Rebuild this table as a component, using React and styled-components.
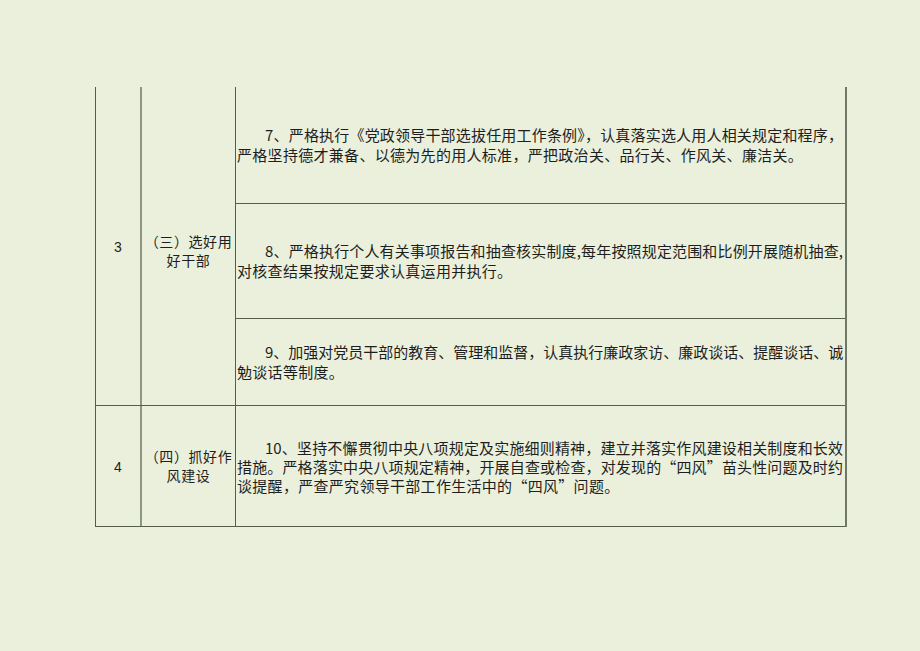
import React from 'react'
import styled, { createGlobalStyle } from 'styled-components'

const GlobalStyle = createGlobalStyle`
  html, body {
    margin: 0;
    padding: 0;
    background: #eaf0dc;
  }
  body {
    width: 920px;
    height: 651px;
    overflow: hidden;
    font-family: "Noto Sans CJK SC", "Liberation Sans", sans-serif;
    color: #1e1e1e;
  }
`

const Page = styled.div`
  padding: 87px 0 0 95px;
`

const Table = styled.div`
  width: 752px;
  box-sizing: border-box;
  border-left: 1px solid #555d4b;
  border-right: 2px solid #6f7766;
`

const Row = styled.div`
  display: grid;
  grid-template-columns: 46px 94px minmax(0, 1fr);
  border-bottom: 1px solid #555d4b;
`

const NumCell = styled.div`
  display: flex;
  align-items: center;
  justify-content: center;
  border-right: 2px solid #8e9584;
  font-family: "Liberation Sans", Arial, sans-serif;
  font-size: 14px;
  padding-top: 2px;
`

const TitleCell = styled.div`
  display: flex;
  flex-direction: column;
  align-items: center;
  justify-content: center;
  border-right: 1px solid #555d4b;
  font-size: 14px;
  line-height: 19px;
  letter-spacing: 0.6px;
  padding-top: ${p => p.$shift || 0}px;
  text-align: center;
`

const Stack = styled.div`
  display: flex;
  flex-direction: column;
  min-width: 0;
`

const ContentCell = styled.div`
  height: ${p => p.$h}px;
  display: flex;
  flex-direction: column;
  justify-content: center;
  overflow: hidden;
  padding: 0 2px 0 1px;
  font-size: 15px;
  line-height: ${p => p.$lh || 20}px;
  border-bottom: ${p => (p.$last ? 'none' : '1px solid #555d4b')};
`

const Line = styled.div`
  white-space: nowrap;
  text-align: justify;
  text-align-last: ${p => (p.$full ? 'justify' : 'left')};
  letter-spacing: ${p => (p.$full ? 0 : 0.3)}px;
  padding-left: ${p => (p.$indent ? 28 : 0)}px;
`

const Para = ({ lines }) =>
  lines.map((t, i) => (
    <Line key={i} $indent={i === 0} $full={i < lines.length - 1}>
      {t}
    </Line>
  ))

const App = () => {
  return (
    <Page>
      <GlobalStyle />
      <Table>
        <Row>
          <NumCell>3</NumCell>
          <TitleCell $shift={10}>
            <div>（三）选好用</div>
            <div>好干部</div>
          </TitleCell>
          <Stack>
            <ContentCell $h={116}>
              <Para
                lines={[
                  '7、严格执行《党政领导干部选拔任用工作条例》，认真落实选人用人相关规定和程序，',
                  '严格坚持德才兼备、以德为先的用人标准，严把政治关、品行关、作风关、廉洁关。',
                ]}
              />
            </ContentCell>
            <ContentCell $h={114}>
              <Para
                lines={[
                  '8、严格执行个人有关事项报告和抽查核实制度,每年按照规定范围和比例开展随机抽查,',
                  '对核查结果按规定要求认真运用并执行。',
                ]}
              />
            </ContentCell>
            <ContentCell $h={86} $last>
              <Para
                lines={[
                  '9、加强对党员干部的教育、管理和监督，认真执行廉政家访、廉政谈话、提醒谈话、诚',
                  '勉谈话等制度。',
                ]}
              />
            </ContentCell>
          </Stack>
        </Row>
        <Row>
          <NumCell>4</NumCell>
          <TitleCell>
            <div>（四）抓好作</div>
            <div>风建设</div>
          </TitleCell>
          <Stack>
            <ContentCell $h={120} $lh={19} $last>
              <Para
                lines={[
                  '10、坚持不懈贯彻中央八项规定及实施细则精神，建立并落实作风建设相关制度和长效',
                  '措施。严格落实中央八项规定精神，开展自查或检查，对发现的“四风”苗头性问题及时约',
                  '谈提醒，严查严究领导干部工作生活中的“四风”问题。',
                ]}
              />
            </ContentCell>
          </Stack>
        </Row>
      </Table>
    </Page>
  )
}

export default App
